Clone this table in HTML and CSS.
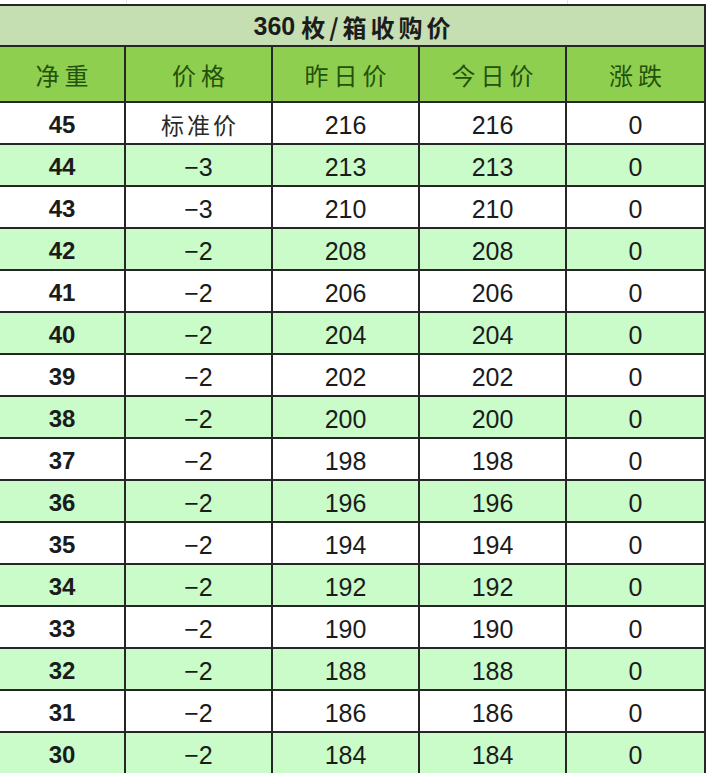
FILE: index.html
```html
<!DOCTYPE html>
<html lang="zh">
<head>
<meta charset="utf-8">
<title>360枚/箱收购价</title>
<link rel="stylesheet" href="styles.css">
</head>
<body>
<div class="top-strip">
  <span class="grid-line gl1"></span>
  <span class="grid-line gl2"></span>
</div>
<div class="sheet">
  <div class="title"><span class="num">360</span>枚/箱收购价</div>
  <div class="hd">净重</div>
  <div class="hd">价格</div>
  <div class="hd">昨日价</div>
  <div class="hd">今日价</div>
  <div class="hd">涨跌</div>

  <div class="c w b">45</div><div class="c w cn">标准价</div><div class="c w">216</div><div class="c w">216</div><div class="c w">0</div>
  <div class="c g b">44</div><div class="c g">−3</div><div class="c g">213</div><div class="c g">213</div><div class="c g">0</div>
  <div class="c w b">43</div><div class="c w">−3</div><div class="c w">210</div><div class="c w">210</div><div class="c w">0</div>
  <div class="c g b">42</div><div class="c g">−2</div><div class="c g">208</div><div class="c g">208</div><div class="c g">0</div>
  <div class="c w b">41</div><div class="c w">−2</div><div class="c w">206</div><div class="c w">206</div><div class="c w">0</div>
  <div class="c g b">40</div><div class="c g">−2</div><div class="c g">204</div><div class="c g">204</div><div class="c g">0</div>
  <div class="c w b">39</div><div class="c w">−2</div><div class="c w">202</div><div class="c w">202</div><div class="c w">0</div>
  <div class="c g b">38</div><div class="c g">−2</div><div class="c g">200</div><div class="c g">200</div><div class="c g">0</div>
  <div class="c w b">37</div><div class="c w">−2</div><div class="c w">198</div><div class="c w">198</div><div class="c w">0</div>
  <div class="c g b">36</div><div class="c g">−2</div><div class="c g">196</div><div class="c g">196</div><div class="c g">0</div>
  <div class="c w b">35</div><div class="c w">−2</div><div class="c w">194</div><div class="c w">194</div><div class="c w">0</div>
  <div class="c g b">34</div><div class="c g">−2</div><div class="c g">192</div><div class="c g">192</div><div class="c g">0</div>
  <div class="c w b">33</div><div class="c w">−2</div><div class="c w">190</div><div class="c w">190</div><div class="c w">0</div>
  <div class="c g b">32</div><div class="c g">−2</div><div class="c g">188</div><div class="c g">188</div><div class="c g">0</div>
  <div class="c w b">31</div><div class="c w">−2</div><div class="c w">186</div><div class="c w">186</div><div class="c w">0</div>
  <div class="c g b">30</div><div class="c g">−2</div><div class="c g">184</div><div class="c g">184</div><div class="c g">0</div>
</div>
</body>
</html>
```
FILE: styles.css
```css
html, body {
  margin: 0;
  padding: 0;
  background: #ffffff;
  overflow: hidden;
}

.top-strip {
  height: 4px;
  position: relative;
}

.grid-line {
  position: absolute;
  top: 0;
  width: 1px;
  height: 4px;
  background: #e4e4e4;
}

.gl1 { left: 126px; }
.gl2 { left: 567px; }

.sheet {
  display: grid;
  grid-template-columns: 124px 145px 145px 145px 137px;
  grid-template-rows: 39px 54px;
  grid-auto-rows: 40px;
  gap: 2px;
  width: max-content;
  padding: 2px 2px 0 0;
  background: #262626;
}

.title {
  grid-column: 1 / -1;
  background: #c5dfb2;
  display: flex;
  align-items: center;
  justify-content: center;
  font-family: "Noto Sans CJK SC", sans-serif;
  font-weight: 700;
  font-size: 24px;
  letter-spacing: 4px;
  text-indent: 4px;
  color: #1c1c1c;
  padding-top: 2px;
}

.title .num {
  font-family: "Liberation Sans", Arial, sans-serif;
  font-weight: 700;
  font-size: 25px;
  letter-spacing: 0;
  margin-right: 2px;
}

.hd {
  background: #8fcf4f;
  display: flex;
  align-items: center;
  justify-content: center;
  font-family: "Noto Sans CJK SC", sans-serif;
  font-size: 24px;
  letter-spacing: 5px;
  text-indent: 5px;
  color: #24520c;
}

.c {
  display: flex;
  align-items: center;
  justify-content: center;
  font-family: "Liberation Sans", Arial, sans-serif;
  font-size: 25px;
  color: #1b1b1b;
  padding-top: 4px;
}

.w { background: #ffffff; }
.g { background: #c9fcc9; }

.b {
  font-weight: 700;
  font-size: 24px;
}

.cn {
  font-family: "Noto Sans CJK SC", sans-serif;
  font-size: 23px;
  letter-spacing: 3px;
  text-indent: 3px;
  color: #2a2a2a;
  padding-top: 2px;
}
```
